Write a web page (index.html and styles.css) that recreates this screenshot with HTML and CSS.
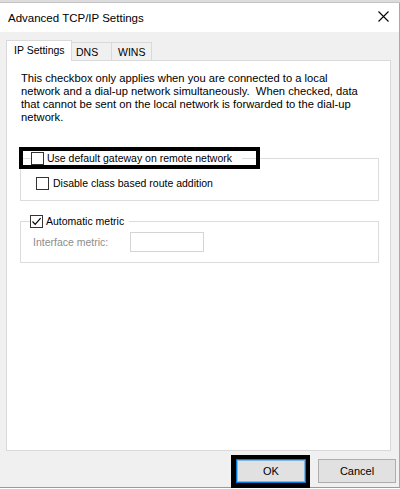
FILE: index.html
```html
<!DOCTYPE html>
<html lang="en">
<head>
<meta charset="utf-8">
<title>Advanced TCP/IP Settings</title>
<link rel="stylesheet" href="styles.css">
</head>
<body>
<div class="top-strip"></div>
<div class="window">
  <div class="titlebar">
    <span class="title">Advanced TCP/IP Settings</span>
    <svg class="close" width="11" height="11" viewBox="0 0 11 11"><path d="M0.5 0.5 L10.5 10.5 M10.5 0.5 L0.5 10.5" stroke="#000" stroke-width="1.1" fill="none"/></svg>
  </div>
  <div class="dialog-body">
    <div class="tabs">
      <div class="tab active">IP Settings</div>
      <div class="tab dns">DNS</div>
      <div class="tab wins">WINS</div>
    </div>
    <div class="panel">
      <p class="info">This checkbox only applies when you are connected to a local<br>network and a dial-up network simultaneously.&nbsp; When checked, data<br>that cannot be sent on the local network is forwarded to the dial-up<br>network.</p>
      <fieldset class="group g1">
        <legend class="legend l1"><span class="cb"></span><span>Use default gateway on remote network</span><span class="highlight"></span></legend>
        <div class="row r1"><span class="cb"></span><span>Disable class based route addition</span></div>
      </fieldset>
      <fieldset class="group g2">
        <legend class="legend l2"><span class="cb checked"><svg width="11" height="11" viewBox="0 0 11 11"><path d="M1.5 5.5 L4.2 8.3 L9.6 2.2" stroke="#000" stroke-width="1.2" fill="none"/></svg></span><span>Automatic metric</span></legend>
        <div class="row r2"><span class="muted">Interface metric:</span><span class="input"></span></div>
      </fieldset>
    </div>
    <div class="buttons">
      <div class="btn ok">OK<span class="btn-highlight"></span></div>
      <div class="btn cancel">Cancel</div>
    </div>
  </div>
</div>
</body>
</html>
```
FILE: styles.css
```css
* { box-sizing: border-box; }
html, body { margin: 0; padding: 0; }
body {
  width: 400px;
  height: 489px;
  overflow: hidden;
  background: #ffffff;
  font-family: "Liberation Sans", Arial, sans-serif;
  font-size: 10.5px;
  color: #000;
  display: flex;
  flex-direction: column;
}
.top-strip {
  height: 3px;
  background: #dcdcdc;
  border-bottom: 1px solid #c4c4c4;
}
.window {
  height: 485px;
  display: flex;
  flex-direction: column;
  border-right: 1px solid #a8a8a8;
  border-bottom: 1px solid #9a9a9a;
}
.titlebar {
  height: 29px;
  background: #fff;
  display: flex;
  align-items: center;
  justify-content: space-between;
  padding: 0 10px 0 8px;
}
.title {
  font-size: 11.5px;
  color: #000;
}
.close { margin-bottom: 3px; }
.dialog-body {
  flex: 1;
  background: #f0f0f0;
  padding-top: 8px;
  display: flex;
  flex-direction: column;
}
.tabs {
  height: 20px;
  margin: 0 8px 0 6px;
  display: flex;
  align-items: flex-end;
  position: relative;
  z-index: 2;
}
.tab {
  height: 18px;
  line-height: 13px;
  padding-top: 3px;
  border: 1px solid #d9d9d9;
  border-left: none;
  border-bottom: none;
  background: #f0f0f0;
}
.tab.active {
  height: 21px;
  width: 66px;
  margin-bottom: -1px;
  padding-left: 7px;
  border-left: 1px solid #d9d9d9;
  background: #fff;
}
.tab.dns { width: 40px; padding-left: 4px; }
.tab.wins { width: 40px; padding-left: 6px; }
.panel {
  height: 391px;
  margin: 0 8px 0 6px;
  background: #fff;
  border: 1px solid #d9d9d9;
  padding: 11px 11px 0 13px;
}
.info {
  margin: 0 0 0 1px;
  font-size: 11.2px;
  line-height: 13px;
  white-space: nowrap;
}
.group {
  margin: 0;
  padding: 0;
  border: 1px solid #dcdcdc;
  min-width: 0;
}
.g1 { margin-top: 28px; }
.g2 { margin-top: 14px; }
.legend {
  padding: 0;
  display: flex;
  align-items: center;
  gap: 3px;
  line-height: 13px;
  height: 13px;
  position: relative;
}
.l1 { margin-left: 10px; padding-right: 10px; }
.l2 { margin-left: 9px; padding-right: 5px; }
.cb {
  width: 13px;
  height: 13px;
  border: 1px solid #333;
  background: #fff;
  display: inline-flex;
  align-items: center;
  justify-content: center;
  flex: none;
}
.cb svg { display: block; }
.highlight {
  position: absolute;
  left: -12px;
  top: -5px;
  width: 241px;
  height: 22px;
  border: 4px solid #000;
  pointer-events: none;
}
.row {
  display: flex;
  align-items: center;
  line-height: 13px;
}
.r1 {
  padding: 12px 0 10px 15px;
  gap: 4px;
}
.r2 {
  padding: 4px 0 10px 12px;
  height: 34px;
}
.muted {
  width: 97px;
  color: #8c8c8c;
}
.input {
  width: 74px;
  height: 20px;
  border: 1px solid #d4d4d4;
  background: #fff;
}
.buttons {
  display: flex;
  justify-content: flex-end;
  gap: 12px;
  margin: 8px 3px 0 0;
  font-size: 11px;
}
.btn {
  height: 24px;
  display: flex;
  align-items: center;
  justify-content: center;
  background: #e1e1e1;
  border: 1px solid #adadad;
  position: relative;
}
.btn.ok {
  width: 70px;
  border: 1px solid #0078d7;
  box-shadow: inset 0 0 0 1px #7fb8e8;
}
.btn.cancel { width: 78px; }
.btn-highlight {
  position: absolute;
  left: -6px;
  top: -5px;
  right: -5px;
  bottom: -6px;
  border: 4px solid #000;
  border-left-width: 5px;
  border-bottom-width: 5px;
  z-index: 3;
}
```
